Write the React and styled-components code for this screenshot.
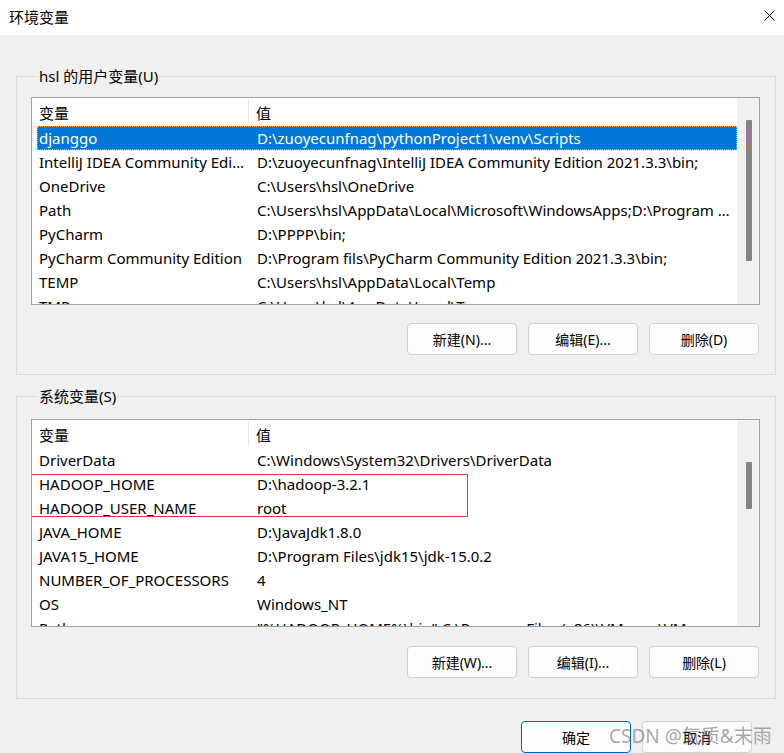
import React from "react";
import styled, { createGlobalStyle } from "styled-components";

const Global = createGlobalStyle`
  html, body { margin: 0; padding: 0; }
  body {
    background: #f0f0f0;
    font-family: "Noto Sans", "Noto Sans CJK SC", sans-serif;
    color: #000;
  }
`;

const Window = styled.div`
  position: relative;
  width: 784px;
  height: 753px;
  overflow: hidden;
  background: #f0f0f0;
  display: flex;
  flex-direction: column;
`;

const TitleBar = styled.div`
  height: 35px;
  flex: none;
  background: #ffffff;
  display: flex;
  align-items: center;
  justify-content: space-between;
  padding: 0 9px 2px 9px;
  box-sizing: border-box;
`;

const Title = styled.div`
  font-size: 15px;
  font-family: "Noto Sans CJK SC", sans-serif;
`;

const CloseBtn = styled.div`
  width: 11px;
  height: 11px;
  display: flex;
  margin-top: -3px;
`;

const Body = styled.div`
  display: flex;
  flex-direction: column;
  padding: 0 8px 0 16px;
`;

const Group = styled.fieldset`
  margin: ${(p) => p.$top}px 0 0 0;
  padding: 0 15px ${(p) => p.$bottom}px 14px;
  border: 1px solid #dcdcdc;
  min-width: 0;
`;

const Legend = styled.legend`
  margin-left: 7px;
  padding: 0 1px;
  font-size: 15px;
  line-height: 20px;
  height: 20px;
  font-family: "Noto Sans", "Noto Sans CJK SC", sans-serif;
`;

const ListView = styled.div`
  margin-top: ${(p) => p.$top}px;
  height: 208px;
  box-sizing: border-box;
  border: 1px solid #a0a0a0;
  background: #ffffff;
  display: flex;
  overflow: hidden;
`;

const ListContent = styled.div`
  flex: 1;
  min-width: 0;
  overflow: hidden;
  display: flex;
  flex-direction: column;
`;

const HeaderRow = styled.div`
  flex: none;
  height: 28px;
  display: flex;
  align-items: center;
  font-size: 15px;
  font-family: "Noto Sans CJK SC", sans-serif;
`;

const HeaderCell = styled.div`
  box-sizing: border-box;
  height: 24px;
  display: flex;
  align-items: center;
  ${(p) =>
    p.$first
      ? `width: 217px; padding-left: 7px; border-right: 1px solid #e5e5e5;`
      : `flex: 1; padding-left: 7px;`}
`;

const Row = styled.div`
  flex: none;
  height: 24px;
  margin-left: 5px;
  display: flex;
  align-items: center;
  font-size: 15px;
  white-space: nowrap;
  box-sizing: border-box;
  background: ${(p) => (p.$selected ? "#0078d7" : "transparent")};
  color: ${(p) => (p.$selected ? "#ffffff" : "#000000")};
  outline: ${(p) => (p.$selected ? "1px dotted #e9a84a" : "none")};
  outline-offset: -1px;
`;

const Cell = styled.div`
  box-sizing: border-box;
  overflow: hidden;
  text-overflow: ellipsis;
  white-space: nowrap;
  ${(p) =>
    p.$first
      ? `width: 212px; flex: none; padding-left: 2px; padding-right: 2px;`
      : `flex: 1; min-width: 0; padding-left: 8px; padding-right: 6px;`}
`;

const Highlight = styled.div`
  position: relative;
  flex: none;
  display: flex;
  flex-direction: column;
  &::after {
    content: "";
    position: absolute;
    left: -5px;
    top: 2px;
    bottom: 3px;
    width: 441px;
    border: 1px solid #e8353a;
    box-sizing: border-box;
    pointer-events: none;
  }
`;

const ScrollTrack = styled.div`
  width: 22px;
  flex: none;
  background: #f0f0f0;
  display: flex;
  justify-content: center;
  padding-left: 1px;
  box-sizing: border-box;
`;

const Thumb = styled.div`
  width: 6px;
  background: #858585;
  border-radius: 1px;
`;

const ButtonRow = styled.div`
  margin-top: ${(p) => p.$top}px;
  display: flex;
  justify-content: flex-end;
  gap: 11px;
  padding-right: 1px;
`;

const Button = styled.div`
  width: 110px;
  height: 32px;
  box-sizing: border-box;
  border: 1px solid ${(p) => (p.$default ? "#0067c0" : "#d0d0d0")};
  border-radius: 4px;
  background: #fdfdfd;
  display: flex;
  align-items: center;
  justify-content: center;
  font-size: 14px;
  font-family: "Noto Sans", "Noto Sans CJK SC", sans-serif;
  color: #000;
`;

const DialogButtons = styled.div`
  margin-top: 22px;
  display: flex;
  justify-content: flex-end;
  gap: 11px;
  padding-right: 24px;
`;

const Watermark = styled.div`
  position: absolute;
  left: 609px;
  top: 723px;
  font-size: 19px;
  line-height: 26px;
  color: rgba(110, 110, 110, 0.6);
  font-family: "Noto Sans", "Noto Sans CJK SC", sans-serif;
  white-space: nowrap;
  pointer-events: none;
`;

const userVars = [
  ["djanggo", "D:\\zuoyecunfnag\\pythonProject1\\venv\\Scripts", true],
  ["IntelliJ IDEA Community Edition", "D:\\zuoyecunfnag\\IntelliJ IDEA Community Edition 2021.3.3\\bin;"],
  ["OneDrive", "C:\\Users\\hsl\\OneDrive"],
  ["Path", "C:\\Users\\hsl\\AppData\\Local\\Microsoft\\WindowsApps;D:\\Program Files\\JetBrains\\bin;"],
  ["PyCharm", "D:\\PPPP\\bin;"],
  ["PyCharm Community Edition", "D:\\Program fils\\PyCharm Community Edition 2021.3.3\\bin;"],
  ["TEMP", "C:\\Users\\hsl\\AppData\\Local\\Temp"],
  ["TMP", "C:\\Users\\hsl\\AppData\\Local\\Temp"],
];

const sysBefore = [["DriverData", "C:\\Windows\\System32\\Drivers\\DriverData"]];
const sysHighlighted = [
  ["HADOOP_HOME", "D:\\hadoop-3.2.1"],
  ["HADOOP_USER_NAME", "root"],
];
const sysAfter = [
  ["JAVA_HOME", "D:\\JavaJdk1.8.0"],
  ["JAVA15_HOME", "D:\\Program Files\\jdk15\\jdk-15.0.2"],
  ["NUMBER_OF_PROCESSORS", "4"],
  ["OS", "Windows_NT"],
  ["Path", "\"%HADOOP_HOME%\\bin\";C:\\Program Files (x86)\\VMware\\VMware Player\\bin\\"],
];

function VarRow({ name, value, selected }) {
  return (
    <Row $selected={selected}>
      <Cell $first>{name}</Cell>
      <Cell>{value}</Cell>
    </Row>
  );
}

function Header() {
  return (
    <HeaderRow>
      <HeaderCell $first>变量</HeaderCell>
      <HeaderCell>值</HeaderCell>
    </HeaderRow>
  );
}

function CloseIcon() {
  return (
    <svg width="11" height="11" viewBox="0 0 11 11">
      <path d="M0.5 0.5 L10.5 10.5 M10.5 0.5 L0.5 10.5" stroke="#000" strokeWidth="1" fill="none" />
    </svg>
  );
}

export default function App() {
  return (
    <>
      <Global />
      <Window>
        <TitleBar>
          <Title>环境变量</Title>
          <CloseBtn>
            <CloseIcon />
          </CloseBtn>
        </TitleBar>
        <Body>
          <Group $top={31} $bottom={19}>
            <Legend>hsl 的用户变量(U)</Legend>
            <ListView $top={11}>
              <ListContent>
                <Header />
                {userVars.map(([n, v, s]) => (
                  <VarRow key={n} name={n} value={v} selected={s} />
                ))}
              </ListContent>
              <ScrollTrack>
                <Thumb style={{ marginTop: 22, height: 141 }} />
              </ScrollTrack>
            </ListView>
            <ButtonRow $top={18}>
              <Button>新建(N)...</Button>
              <Button>编辑(E)...</Button>
              <Button>删除(D)</Button>
            </ButtonRow>
          </Group>
          <Group $top={11} $bottom={20}>
            <Legend>系统变量(S)</Legend>
            <ListView $top={13}>
              <ListContent>
                <Header />
                {sysBefore.map(([n, v]) => (
                  <VarRow key={n} name={n} value={v} />
                ))}
                <Highlight>
                  {sysHighlighted.map(([n, v]) => (
                    <VarRow key={n} name={n} value={v} />
                  ))}
                </Highlight>
                {sysAfter.map(([n, v]) => (
                  <VarRow key={n} name={n} value={v} />
                ))}
              </ListContent>
              <ScrollTrack>
                <Thumb style={{ marginTop: 42, height: 47 }} />
              </ScrollTrack>
            </ListView>
            <ButtonRow $top={19}>
              <Button>新建(W)...</Button>
              <Button>编辑(I)...</Button>
              <Button>删除(L)</Button>
            </ButtonRow>
          </Group>
          <DialogButtons>
            <Button $default>确定</Button>
            <Button>取消</Button>
          </DialogButtons>
        </Body>
        <Watermark>CSDN @気质&amp;末雨</Watermark>
      </Window>
    </>
  );
}
